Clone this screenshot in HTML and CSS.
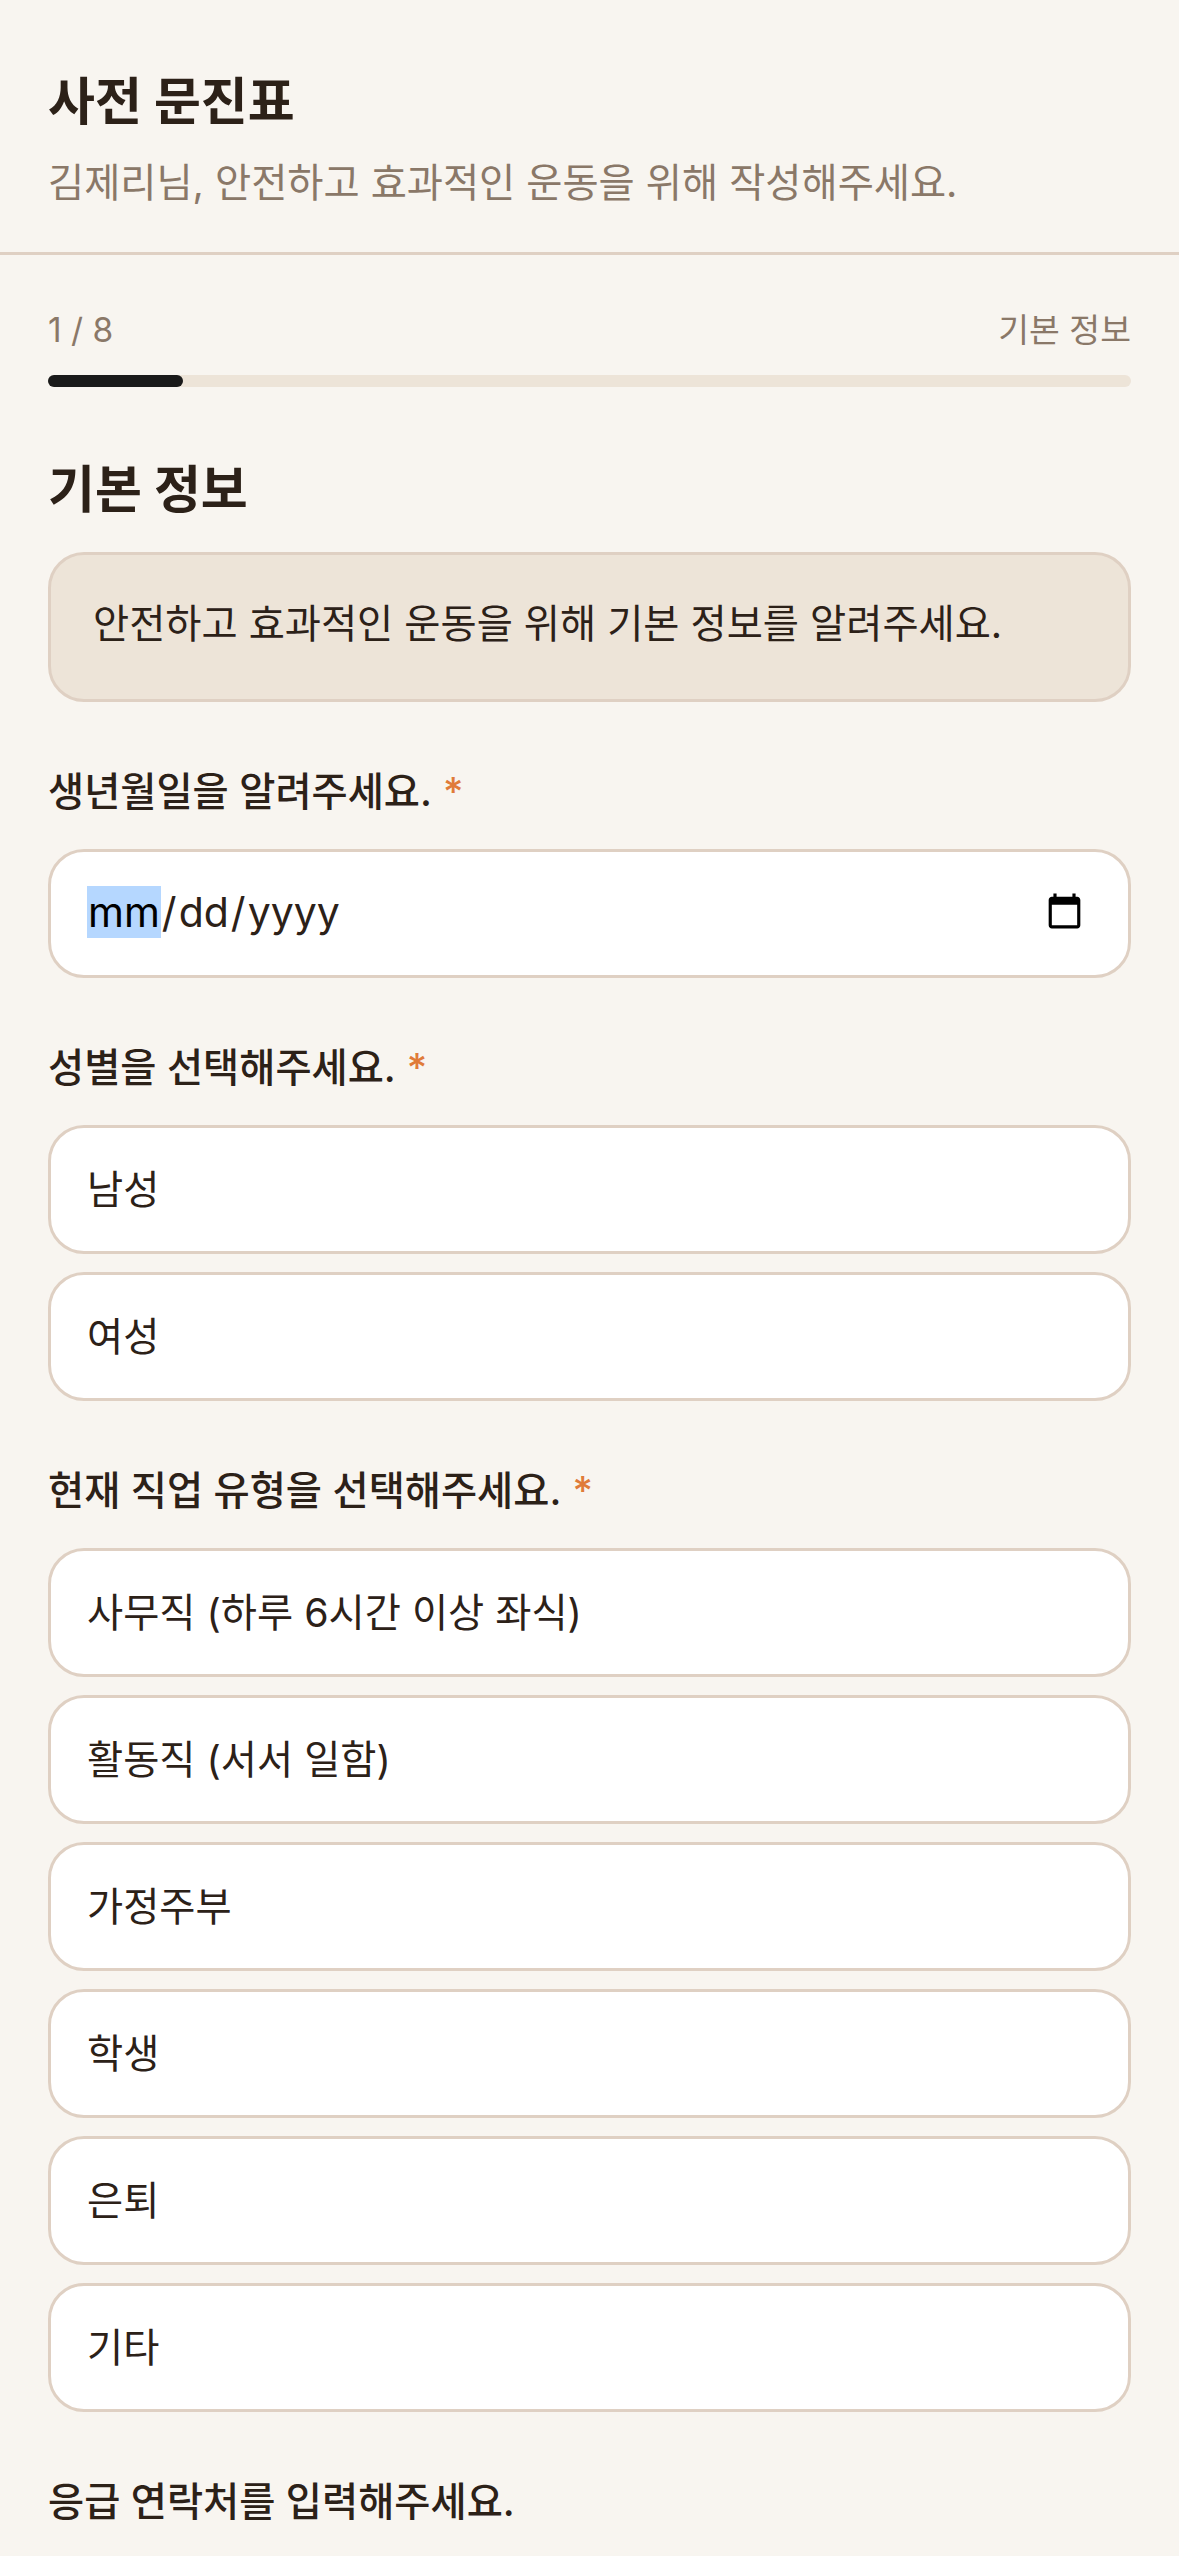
FILE: index.html
```html
<!DOCTYPE html>
<html lang="ko">
<head>
  <meta charset="UTF-8">
  <title>사전 문진표</title>
  <link rel="stylesheet" href="styles.css">
</head>
<body>

  <header class="header">
    <h1>사전 문진표</h1>
    <p>김제리님, 안전하고 효과적인 운동을 위해 작성해주세요.</p>
  </header>

  <main class="content">
    <div class="progress-text">
      <span>1 / 8</span>
      <span>기본 정보</span>
    </div>
    <div class="progress-track">
      <div class="progress-fill"></div>
    </div>

    <h2>기본 정보</h2>

    <div class="info-box">안전하고 효과적인 운동을 위해 기본 정보를 알려주세요.</div>

    <section class="question">
      <label class="question-label">생년월일을 알려주세요. <span class="required">*</span></label>
      <input class="date-input" type="date">
    </section>

    <section class="question">
      <div class="question-label">성별을 선택해주세요. <span class="required">*</span></div>
      <div class="options">
        <button class="option">남성</button>
        <button class="option">여성</button>
      </div>
    </section>

    <section class="question">
      <div class="question-label">현재 직업 유형을 선택해주세요. <span class="required">*</span></div>
      <div class="options">
        <button class="option">사무직 (하루 6시간 이상 좌식)</button>
        <button class="option">활동직 (서서 일함)</button>
        <button class="option">가정주부</button>
        <button class="option">학생</button>
        <button class="option">은퇴</button>
        <button class="option">기타</button>
      </div>
    </section>

    <section class="question">
      <div class="question-label">응급 연락처를 입력해주세요.</div>
    </section>
  </main>

</body>
</html>
```

FILE: styles.css
```css
* {
  box-sizing: border-box;
}

body {
  margin: 0;
  background: #f8f5f0;
  color: #2c2118;
  font-family: Inter, "Noto Sans CJK KR", sans-serif;
}

.header {
  height: 255px;
  padding: 66px 48px 0;
  border-bottom: 3px solid #dfd0c3;
}

h1 {
  margin: 0;
  font-size: 51px;
  line-height: 72px;
  font-weight: 700;
}

.header p {
  margin: 13px 0 0;
  font-size: 39.3px;
  line-height: 63px;
  color: #8a7868;
}

.content {
  padding: 48px 48px 0;
}

.progress-text {
  display: flex;
  justify-content: space-between;
  font-size: 33.5px;
  line-height: 54px;
  color: #8a7868;
}

.progress-track {
  height: 12px;
  margin-top: 18px;
  background: #ede4d8;
  border-radius: 6px;
}

.progress-fill {
  width: 12.5%;
  height: 100%;
  background: #1a1a1a;
  border-radius: 6px;
}

h2 {
  margin: 67px 0 0;
  font-size: 51px;
  line-height: 72px;
  font-weight: 700;
}

.info-box {
  height: 150px;
  margin-top: 26px;
  padding: 37px 42px;
  background: #ede4d8;
  border: 3px solid #dfd0c3;
  border-radius: 36px;
  font-size: 39.3px;
  line-height: 63px;
}

.question {
  margin-top: 60px;
}

.question-label {
  display: block;
  padding-bottom: 3px;
  font-size: 39.3px;
  line-height: 60px;
  font-weight: 500;
}

.required {
  color: #e07b39;
  margin-left: 1px;
}

.date-input {
  display: block;
  width: 100%;
  height: 129px;
  margin-top: 24px;
  padding: 0 41px 3px 36px;
  background: #fff;
  border: 3px solid #dfd0c3;
  border-radius: 36px;
  outline: none;
  font-family: inherit;
  font-size: 41px;
  color: #2c2118;
}

/* the month part shows as selected, like a focused field */
.date-input::-webkit-datetime-edit-month-field {
  background: #b5d7ff;
  color: #000;
}

.date-input::-webkit-datetime-edit-text {
  padding: 0 1px;
}

.options {
  display: flex;
  flex-direction: column;
  gap: 18px;
  margin-top: 24px;
}

.option {
  height: 129px;
  padding: 0 36px 6px;
  background: #fff;
  border: 3px solid #dfd0c3;
  border-radius: 36px;
  font-family: inherit;
  font-size: 39.3px;
  color: #2c2118;
  text-align: left;
}
```
